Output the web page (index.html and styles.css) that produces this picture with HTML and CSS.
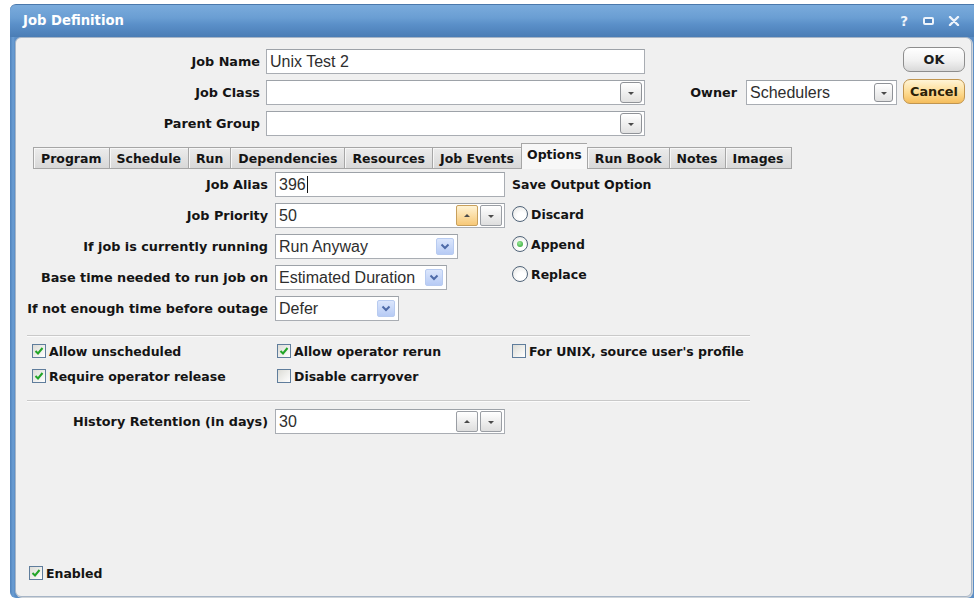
FILE: index.html
```html
<!DOCTYPE html>
<html>
<head>
<meta charset="utf-8">
<title>Job Definition</title>
<link rel="stylesheet" href="styles.css">
</head>
<body>
<div class="window">
  <div class="titlebar">
    <span class="title">Job Definition</span>
    <div class="controls">
      <span class="ctl">?</span>
      <span class="ctl-max"></span>
      <svg class="ctl-close" width="12" height="10" viewBox="0 0 12 10"><path d="M2 1 L10 9 M10 1 L2 9" stroke="#eef4fb" stroke-width="2.4" stroke-linecap="round"/></svg>
    </div>
  </div>

  <div class="panel">
    <div class="header">
      <label class="lbl">Job Name</label>
      <div class="box"><span class="val">Unix Test 2</span></div>
      <div></div><div></div>
      <button class="btn ok">OK</button>

      <label class="lbl">Job Class</label>
      <div class="box"><span class="val"></span><span class="dd"><i class="tri-down"></i></span></div>
      <label class="lbl owner">Owner</label>
      <div class="box"><span class="val">Schedulers</span><span class="dd small"><i class="tri-down"></i></span></div>
      <button class="btn cancel">Cancel</button>

      <label class="lbl">Parent Group</label>
      <div class="box"><span class="val"></span><span class="dd"><i class="tri-down"></i></span></div>
    </div>

    <div class="tabs">
      <span class="tab">Program</span>
      <span class="tab">Schedule</span>
      <span class="tab">Run</span>
      <span class="tab">Dependencies</span>
      <span class="tab">Resources</span>
      <span class="tab">Job Events</span>
      <span class="tab active">Options</span>
      <span class="tab">Run Book</span>
      <span class="tab">Notes</span>
      <span class="tab last">Images</span>
    </div>

    <div class="options">
      <div class="opt-grid">
        <label class="lbl">Job Alias</label>
        <div class="box w230"><span class="val">396<i class="caret"></i></span></div>

        <label class="lbl">Job Priority</label>
        <div class="box w230"><span class="val">50</span><span class="spin up"><i class="tri-up"></i></span><span class="spin"><i class="tri-down"></i></span></div>

        <label class="lbl">If job is currently running</label>
        <div class="box sel w183"><span class="val">Run Anyway</span><span class="xp-arrow"><svg width="10" height="7" viewBox="0 0 10 7"><path d="M1.5 1.5 L5 5 L8.5 1.5" fill="none" stroke="#4d6aa8" stroke-width="2"/></svg></span></div>

        <label class="lbl">Base time needed to run job on</label>
        <div class="box sel w172"><span class="val">Estimated Duration</span><span class="xp-arrow"><svg width="10" height="7" viewBox="0 0 10 7"><path d="M1.5 1.5 L5 5 L8.5 1.5" fill="none" stroke="#4d6aa8" stroke-width="2"/></svg></span></div>

        <label class="lbl">If not enough time before outage</label>
        <div class="box sel w124"><span class="val">Defer</span><span class="xp-arrow"><svg width="10" height="7" viewBox="0 0 10 7"><path d="M1.5 1.5 L5 5 L8.5 1.5" fill="none" stroke="#4d6aa8" stroke-width="2"/></svg></span></div>
      </div>

      <div class="save-output">
        <div class="save-title">Save Output Option</div>
        <div class="radio-row"><span class="radio"></span>Discard</div>
        <div class="radio-row"><span class="radio on"></span>Append</div>
        <div class="radio-row"><span class="radio"></span>Replace</div>
      </div>
    </div>

    <div class="sep"></div>

    <div class="checks">
      <div class="chk-row"><span class="chk on"><svg width="12" height="12" viewBox="0 0 12 12"><path d="M2.5 6 L5 8.5 L9.5 3" fill="none" stroke="#22a528" stroke-width="2"/></svg></span>Allow unscheduled</div>
      <div class="chk-row"><span class="chk on"><svg width="12" height="12" viewBox="0 0 12 12"><path d="M2.5 6 L5 8.5 L9.5 3" fill="none" stroke="#22a528" stroke-width="2"/></svg></span>Allow operator rerun</div>
      <div class="chk-row"><span class="chk"></span>For UNIX, source user's profile</div>
      <div class="chk-row"><span class="chk on"><svg width="12" height="12" viewBox="0 0 12 12"><path d="M2.5 6 L5 8.5 L9.5 3" fill="none" stroke="#22a528" stroke-width="2"/></svg></span>Require operator release</div>
      <div class="chk-row"><span class="chk"></span>Disable carryover</div>
      <div></div>
    </div>

    <div class="sep sep2"></div>

    <div class="opt-grid history">
      <label class="lbl">History Retention (in days)</label>
      <div class="box w230"><span class="val">30</span><span class="spin"><i class="tri-up"></i></span><span class="spin"><i class="tri-down"></i></span></div>
    </div>

    <div class="filler"></div>

    <div class="chk-row enabled"><span class="chk on"><svg width="12" height="12" viewBox="0 0 12 12"><path d="M2.5 6 L5 8.5 L9.5 3" fill="none" stroke="#22a528" stroke-width="2"/></svg></span>Enabled</div>
  </div>
</div>
</body>
</html>
```

FILE: styles.css
```css
html, body {
  margin: 0;
  background: #ffffff;
}

body {
  font-family: "DejaVu Sans", Verdana, sans-serif;
  font-size: 12.5px;
  color: #141414;
}

/* window frame */
.window {
  margin: 4px 0 0 10px;
  width: 964px;
  height: 594px;
  display: flex;
  flex-direction: column;
  background: linear-gradient(90deg, #4f82bb 0, #6a9dd3 3px, #5b8ec6 5px);
  border-radius: 6px 0 0 6px;
  border-top: 1px solid #4a78ab;
  box-sizing: border-box;
}

.titlebar {
  flex: none;
  height: 32px;
  display: flex;
  align-items: flex-start;
  padding: 8px 0 0 13px;
  box-sizing: border-box;
  color: #ffffff;
  background: linear-gradient(#7aabdc 0%, #6a9ed3 40%, #5b90c9 60%, #4a7db5 100%);
  border-radius: 6px 0 0 0;
}

.title {
  font-weight: bold;
  font-size: 13.2px;
}

.controls {
  margin-left: auto;
  margin-right: 14px;
  display: flex;
  align-items: center;
  height: 16px;
  color: #eef4fb;
  font-weight: bold;
  font-size: 13.5px;
}

.ctl {
  margin-right: 15px;
}

.ctl-max {
  width: 7px;
  height: 4px;
  border: 2px solid #eef4fb;
  background: #4f83bd;
  border-radius: 2px;
  margin-right: 14px;
}

/* content panel */
.panel {
  flex: 1;
  margin: 0 2px 1px 5px;
  background: #f0f0f0;
  border: 1px solid #a7b5c6;
  border-radius: 6px;
  display: flex;
  flex-direction: column;
  padding: 11px 0 13px 0;
  box-shadow: 1px 1px 0 #d0d5da;
}

.lbl {
  font-weight: bold;
  text-align: right;
  white-space: nowrap;
  align-self: center;
  font-size: 12.8px;
}

.header {
  display: grid;
  grid-template-columns: 244px 379px 89px 151px 62px;
  grid-template-rows: 25px 25px 25px;
  column-gap: 6px;
  row-gap: 6px;
}

.lbl.owner {
  padding-right: 3px;
}

/* text boxes */
.box {
  box-sizing: border-box;
  height: 25px;
  background: #ffffff;
  border: 1px solid #a9adb3;
  border-top-color: #9da2a8;
  display: flex;
  align-items: center;
  padding: 0 2px 0 3px;
  font-family: "Liberation Sans", Arial, sans-serif;
  font-size: 16px;
  color: #2e2e2e;
}

.box .val {
  flex: 1;
  white-space: nowrap;
  display: flex;
  align-items: center;
}

.caret {
  display: inline-block;
  width: 1px;
  height: 17px;
  background: #111;
  margin-left: 1px;
}

.w230 { width: 230px; }
.w183 { width: 183px; }
.w172 { width: 172px; }
.w124 { width: 124px; }

/* dropdown buttons inside combo boxes */
.dd {
  box-sizing: border-box;
  width: 22px;
  height: 21px;
  border: 1px solid #8f9297;
  border-radius: 3px;
  background: linear-gradient(#ffffff, #e1e1e1);
  display: flex;
  align-items: center;
  justify-content: center;
}

.dd.small {
  width: 19px;
  height: 19px;
  margin-right: 1px;
}

.tri-down {
  width: 0;
  height: 0;
  border-left: 3.5px solid transparent;
  border-right: 3.5px solid transparent;
  border-top: 3.5px solid #4a4a4a;
  margin-top: 2px;
}

.tri-up {
  width: 0;
  height: 0;
  border-left: 3.5px solid transparent;
  border-right: 3.5px solid transparent;
  border-bottom: 3.5px solid #4a4a4a;
}

/* spinner buttons */
.spin {
  box-sizing: border-box;
  width: 22px;
  height: 21px;
  border: 1px solid #9a9ea4;
  border-radius: 2px;
  background: linear-gradient(#ffffff, #dedede);
  display: flex;
  align-items: center;
  justify-content: center;
  margin-left: 2px;
}

.spin.up {
  border-color: #c8a05c;
  background: linear-gradient(#fff3d4, #f7c877);
}

/* xp style select arrow */
.sel {
  padding-right: 3px;
}

.xp-arrow {
  box-sizing: border-box;
  width: 18px;
  height: 17px;
  border: 1px solid #b8cbf0;
  border-radius: 2px;
  background: linear-gradient(#dbe6fc, #b7cbf5);
  display: flex;
  align-items: center;
  justify-content: center;
}

/* dialog buttons */
.btn {
  box-sizing: border-box;
  height: 25px;
  width: 62px;
  border: 1px solid #8d8d8d;
  border-radius: 7px;
  background: linear-gradient(#ffffff 0%, #f1f1f1 55%, #d9d9d9 100%);
  font-family: "DejaVu Sans", Verdana, sans-serif;
  font-weight: bold;
  font-size: 12.8px;
  color: #1c1c1c;
  padding: 0;
}

.btn.ok {
  margin-top: -2px;
}

.btn.cancel {
  margin-top: -1px;
  border-color: #c09550;
  background: linear-gradient(#fff4d6 0%, #fddb92 55%, #f5bd5c 100%);
  color: #2a2008;
}

/* tab strip */
.tabs {
  display: flex;
  align-items: flex-end;
  margin: 7px 0 0 17px;
  height: 26px;
}

.tab {
  box-sizing: border-box;
  height: 22px;
  padding: 0 7px;
  display: flex;
  align-items: center;
  font-weight: bold;
  border: 1px solid #a6a6a6;
  border-right: none;
  background: linear-gradient(#ececec, #d8d8d8);
  box-shadow: inset 1px 1px 0 #f7f7f7;
  white-space: nowrap;
}

.tab.last {
  border-right: 1px solid #a6a6a6;
}

.tab.active {
  height: 26px;
  padding: 0 5px 4px;
  background: #f7f7f7;
  border-bottom: none;
  box-shadow: none;
}

/* options tab body */
.options {
  display: flex;
  margin-top: 3px;
}

.opt-grid {
  display: grid;
  grid-template-columns: 252px auto;
  grid-auto-rows: 25px;
  column-gap: 7px;
  row-gap: 6px;
  align-items: center;
}

.save-output {
  margin-left: 7px;
  display: flex;
  flex-direction: column;
  gap: 4px;
  font-weight: bold;
}

.save-title {
  height: 25px;
  display: flex;
  align-items: center;
}

.radio-row {
  height: 26px;
  display: flex;
  align-items: center;
  gap: 3px;
}

.radio {
  box-sizing: border-box;
  width: 16px;
  height: 16px;
  border-radius: 50%;
  border: 1px solid #4f6378;
  background: radial-gradient(circle at 60% 65%, #ffffff 30%, #e3e3e0 100%);
  display: flex;
  align-items: center;
  justify-content: center;
}

.radio.on::after {
  content: "";
  width: 6px;
  height: 6px;
  border-radius: 50%;
  background: radial-gradient(circle at 40% 35%, #9ee89c, #25a128);
}

/* etched separators */
.sep {
  margin: 14px 0 0 11px;
  width: 723px;
  height: 0;
  border-top: 1px solid #c9c9c9;
  border-bottom: 1px solid #fbfbfb;
}

.sep2 {
  margin-top: 14px;
}

/* check boxes */
.checks {
  display: grid;
  grid-template-columns: 245px 235px auto;
  grid-auto-rows: 20px;
  row-gap: 5px;
  margin: 4px 0 0 16px;
}

.chk-row {
  display: flex;
  align-items: center;
  gap: 3px;
  font-weight: bold;
  white-space: nowrap;
}

.chk {
  box-sizing: border-box;
  width: 14px;
  height: 14px;
  border: 1px solid #5f7d9c;
  background: linear-gradient(135deg, #dcdcd6, #ffffff);
  display: flex;
  align-items: center;
  justify-content: center;
}

.history {
  margin-top: 7px;
}

.filler {
  flex: 1;
}

.enabled {
  margin-left: 13px;
  height: 20px;
}
```
